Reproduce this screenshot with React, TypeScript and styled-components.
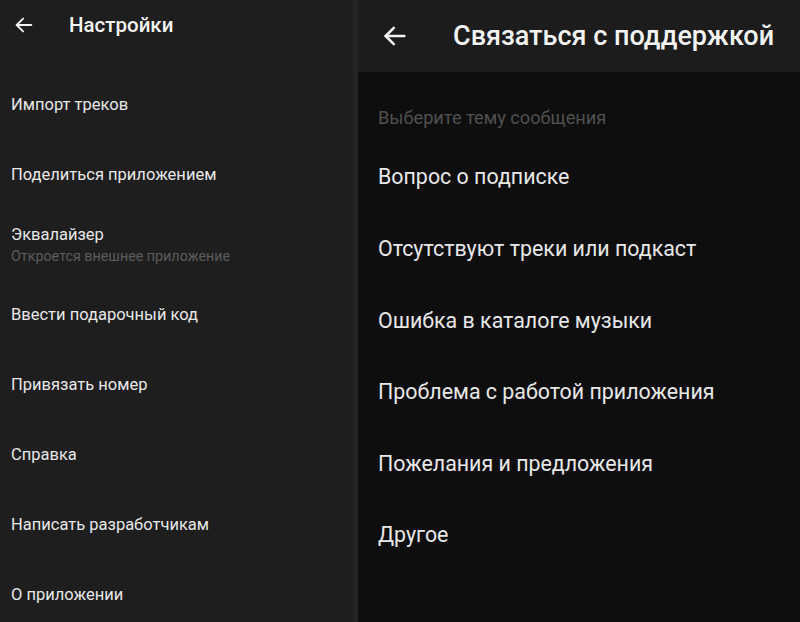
import React from "react";
import styled, { createGlobalStyle } from "styled-components";

const GlobalStyle = createGlobalStyle`
  html, body { margin: 0; padding: 0; background: #0e0e0e; }
  body { font-family: Roboto, "Noto Sans", "Liberation Sans", sans-serif; -webkit-font-smoothing: antialiased; }
  * { box-sizing: border-box; }
`;

const Screen = styled.div`
  width: 800px;
  height: 622px;
  display: flex;
  overflow: hidden;
`;

const LeftPanel = styled.section`
  width: 353px;
  flex: none;
  background: #1e1e1e;
  display: flex;
  flex-direction: column;
`;

const Divider = styled.div`
  width: 5px;
  flex: none;
  background: #242424;
`;

const RightPanel = styled.section`
  flex: 1;
  background: #0e0e0e;
  display: flex;
  flex-direction: column;
`;

const Header = styled.header<{ $h: number; $pad: number; $gap: number; $bg: string }>`
  height: ${(p) => p.$h}px;
  flex: none;
  display: flex;
  align-items: center;
  padding-left: ${(p) => p.$pad}px;
  gap: ${(p) => p.$gap}px;
  background: ${(p) => p.$bg};
`;

const BackIcon = styled.svg<{ $size: number }>`
  width: ${(p) => p.$size}px;
  height: ${(p) => p.$size}px;
  flex: none;
  color: #f2f2f2;
`;

const Title = styled.h1<{ $size: number }>`
  margin: 0;
  font-size: ${(p) => p.$size}px;
  font-weight: 500;
  color: #f4f4f4;
  white-space: nowrap;
`;

const List = styled.div<{ $top: number }>`
  display: flex;
  flex-direction: column;
  padding-top: ${(p) => p.$top}px;
`;

const Row = styled.div<{ $h: number; $pad: number }>`
  height: ${(p) => p.$h}px;
  flex: none;
  display: flex;
  flex-direction: column;
  justify-content: center;
  padding-left: ${(p) => p.$pad}px;
`;

const ItemText = styled.div<{ $size: number }>`
  font-size: ${(p) => p.$size}px;
  line-height: 1.25;
  color: #e8e8e8;
  white-space: nowrap;
`;

const ItemSub = styled.div`
  font-size: 14.3px;
  line-height: 18px;
  margin-top: 2px;
  color: #5c5c5c;
  white-space: nowrap;
`;

const SectionLabel = styled.div`
  font-size: 18.2px;
  line-height: 20px;
  color: #505050;
  padding: 36px 0 14px 20px;
  white-space: nowrap;
`;

const Back = ({ size, stroke }: { size: number; stroke: number }) => (
  <BackIcon $size={size} viewBox="0 0 24 24" fill="none" stroke="currentColor" strokeWidth={stroke} strokeLinecap="round" strokeLinejoin="round">
    <path d="M20 12H4" />
    <path d="M11 5l-7 7 7 7" />
  </BackIcon>
);

const leftItems: { title: string; sub?: string }[] = [
  { title: "Импорт треков" },
  { title: "Поделиться приложением" },
  { title: "Эквалайзер", sub: "Откроется внешнее приложение" },
  { title: "Ввести подарочный код" },
  { title: "Привязать номер" },
  { title: "Справка" },
  { title: "Написать разработчикам" },
  { title: "О приложении" },
];

const rightItems = [
  "Вопрос о подписке",
  "Отсутствуют треки или подкаст",
  "Ошибка в каталоге музыки",
  "Проблема с работой приложения",
  "Пожелания и предложения",
  "Другое",
];

export default function App() {
  return (
    <>
      <GlobalStyle />
      <Screen>
        <LeftPanel>
          <Header $h={50} $pad={13} $gap={34} $bg="#1e1e1e">
            <Back size={22} stroke={2} />
            <Title $size={20.5}>Настройки</Title>
          </Header>
          <List $top={20}>
            {leftItems.map((it) => (
              <Row key={it.title} $h={70} $pad={11}>
                <ItemText $size={16.5}>{it.title}</ItemText>
                {it.sub && <ItemSub>{it.sub}</ItemSub>}
              </Row>
            ))}
          </List>
        </LeftPanel>
        <Divider />
        <RightPanel>
          <Header $h={72} $pad={23} $gap={44} $bg="#1c1c1c">
            <Back size={28} stroke={2.2} />
            <Title $size={27}>Связаться с поддержкой</Title>
          </Header>
          <SectionLabel>Выберите тему сообщения</SectionLabel>
          <List $top={0}>
            {rightItems.map((t) => (
              <Row key={t} $h={71.6} $pad={20}>
                <ItemText $size={21.4}>{t}</ItemText>
              </Row>
            ))}
          </List>
        </RightPanel>
      </Screen>
    </>
  );
}
